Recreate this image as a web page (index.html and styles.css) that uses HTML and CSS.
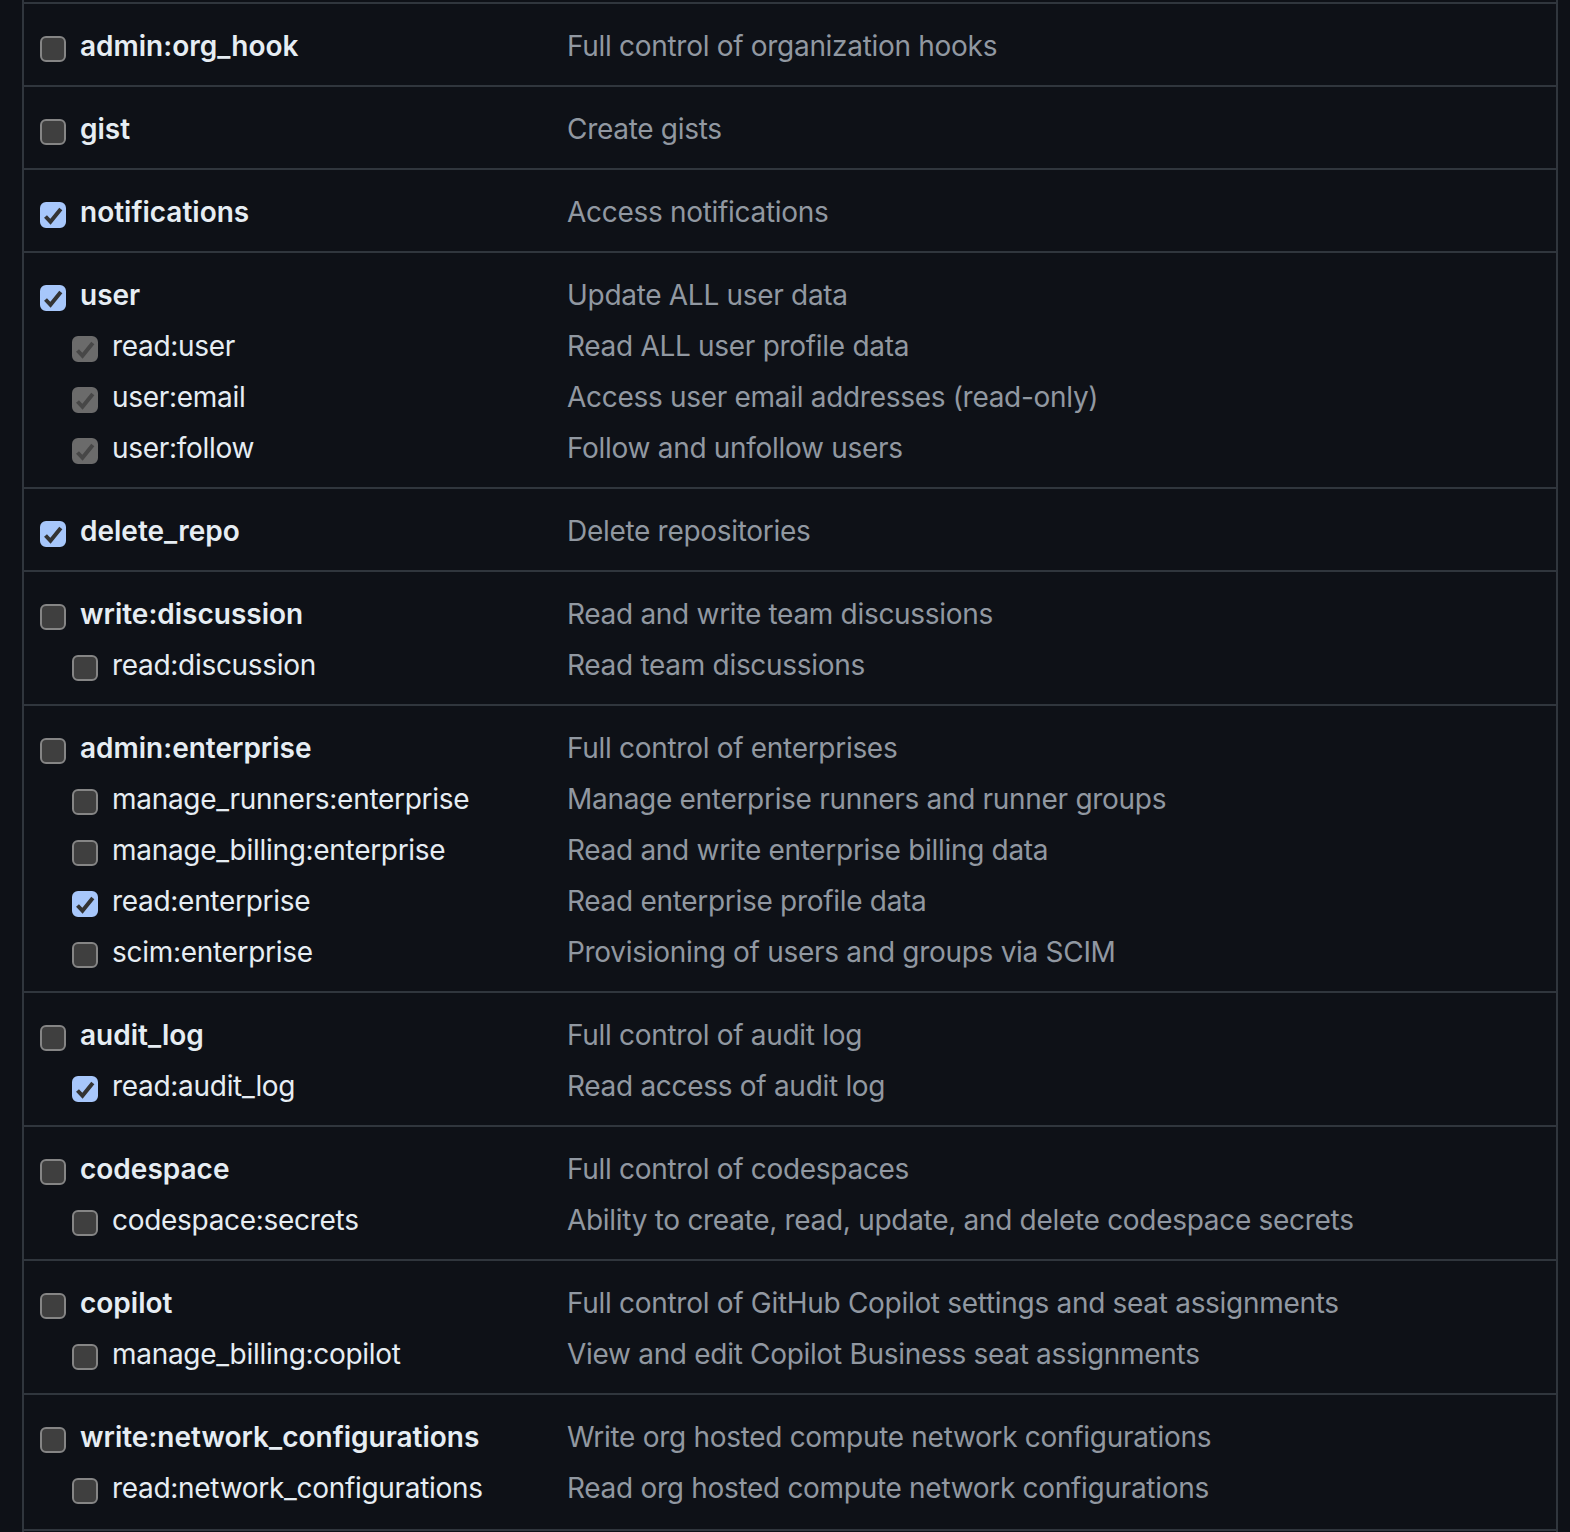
FILE: index.html
```html
<!DOCTYPE html>
<html lang="en">
<head>
<meta charset="utf-8">
<title>Scopes</title>
<link rel="stylesheet" href="styles.css">
</head>
<body>
<div class="scopes">
  <div class="group">
    <div class="line parent"><label class="name"><span class="cb"></span>admin:org_hook</label><span class="desc">Full control of organization hooks</span></div>
  </div>
  <div class="group">
    <div class="line parent"><label class="name"><span class="cb"></span>gist</label><span class="desc">Create gists</span></div>
  </div>
  <div class="group">
    <div class="line parent"><label class="name"><span class="cb checked"><svg viewBox="0 0 26 26"><path d="M5.5 14.5 L10.5 19.8 L20.8 7"/></svg></span>notifications</label><span class="desc">Access notifications</span></div>
  </div>
  <div class="group">
    <div class="line parent"><label class="name"><span class="cb checked"><svg viewBox="0 0 26 26"><path d="M5.5 14.5 L10.5 19.8 L20.8 7"/></svg></span>user</label><span class="desc">Update ALL user data</span></div>
    <div class="line child"><label class="name"><span class="cb disabled"><svg viewBox="0 0 26 26"><path d="M5.5 14.5 L10.5 19.8 L20.8 7"/></svg></span>read:user</label><span class="desc">Read ALL user profile data</span></div>
    <div class="line child"><label class="name"><span class="cb disabled"><svg viewBox="0 0 26 26"><path d="M5.5 14.5 L10.5 19.8 L20.8 7"/></svg></span>user:email</label><span class="desc">Access user email addresses (read-only)</span></div>
    <div class="line child"><label class="name"><span class="cb disabled"><svg viewBox="0 0 26 26"><path d="M5.5 14.5 L10.5 19.8 L20.8 7"/></svg></span>user:follow</label><span class="desc">Follow and unfollow users</span></div>
  </div>
  <div class="group">
    <div class="line parent"><label class="name"><span class="cb checked"><svg viewBox="0 0 26 26"><path d="M5.5 14.5 L10.5 19.8 L20.8 7"/></svg></span>delete_repo</label><span class="desc">Delete repositories</span></div>
  </div>
  <div class="group">
    <div class="line parent"><label class="name"><span class="cb"></span>write:discussion</label><span class="desc">Read and write team discussions</span></div>
    <div class="line child"><label class="name"><span class="cb"></span>read:discussion</label><span class="desc">Read team discussions</span></div>
  </div>
  <div class="group">
    <div class="line parent"><label class="name"><span class="cb"></span>admin:enterprise</label><span class="desc">Full control of enterprises</span></div>
    <div class="line child"><label class="name"><span class="cb"></span>manage_runners:enterprise</label><span class="desc">Manage enterprise runners and runner groups</span></div>
    <div class="line child"><label class="name"><span class="cb"></span>manage_billing:enterprise</label><span class="desc">Read and write enterprise billing data</span></div>
    <div class="line child"><label class="name"><span class="cb checked"><svg viewBox="0 0 26 26"><path d="M5.5 14.5 L10.5 19.8 L20.8 7"/></svg></span>read:enterprise</label><span class="desc">Read enterprise profile data</span></div>
    <div class="line child"><label class="name"><span class="cb"></span>scim:enterprise</label><span class="desc">Provisioning of users and groups via SCIM</span></div>
  </div>
  <div class="group">
    <div class="line parent"><label class="name"><span class="cb"></span>audit_log</label><span class="desc">Full control of audit log</span></div>
    <div class="line child"><label class="name"><span class="cb checked"><svg viewBox="0 0 26 26"><path d="M5.5 14.5 L10.5 19.8 L20.8 7"/></svg></span>read:audit_log</label><span class="desc">Read access of audit log</span></div>
  </div>
  <div class="group">
    <div class="line parent"><label class="name"><span class="cb"></span>codespace</label><span class="desc">Full control of codespaces</span></div>
    <div class="line child"><label class="name"><span class="cb"></span>codespace:secrets</label><span class="desc">Ability to create, read, update, and delete codespace secrets</span></div>
  </div>
  <div class="group">
    <div class="line parent"><label class="name"><span class="cb"></span>copilot</label><span class="desc">Full control of GitHub Copilot settings and seat assignments</span></div>
    <div class="line child"><label class="name"><span class="cb"></span>manage_billing:copilot</label><span class="desc">View and edit Copilot Business seat assignments</span></div>
  </div>
  <div class="group">
    <div class="line parent"><label class="name"><span class="cb"></span>write:network_configurations</label><span class="desc">Write org hosted compute network configurations</span></div>
    <div class="line child"><label class="name"><span class="cb"></span>read:network_configurations</label><span class="desc">Read org hosted compute network configurations</span></div>
  </div>
</div>
</body>
</html>
```
FILE: styles.css
```css
html, body {
  margin: 0;
  padding: 0;
  background: #0e1117;
}
body {
  font-family: Inter, "Noto Sans", "Liberation Sans", sans-serif;
  font-size: 28px;
  color: #e6edf3;
}
.scopes {
  box-sizing: border-box;
  margin-left: 22px;
  width: 1536px;
  min-height: 1532px;
  padding-top: 2px;
  border-left: 2px solid #30363d;
  border-right: 2px solid #30363d;
}
.group {
  border-top: 2px solid #30363d;
  padding: 15px 16px;
}
.group:last-child {
  border-bottom: 2px solid #30363d;
  padding-bottom: 17px;
}
.line {
  box-sizing: border-box;
  display: grid;
  grid-template-columns: 527px 1fr;
  align-items: center;
  height: 51px;
  padding-top: 2px;
  white-space: nowrap;
}
.name {
  display: flex;
  align-items: center;
  gap: 14px;
}
.parent .name {
  font-weight: 600;
}
.child .name {
  padding-left: 32px;
  letter-spacing: -0.3px;
}
.desc {
  color: #9198a1;
  letter-spacing: -0.3px;
}
.cb {
  box-sizing: border-box;
  flex: none;
  width: 26px;
  height: 26px;
  margin-top: 6px;
  border-radius: 6px;
  border: 2px solid #858585;
  background: #3f3f3f;
  display: flex;
}
.cb svg {
  width: 26px;
  height: 26px;
  margin: -2px;
}
.cb path {
  fill: none;
  stroke: #333333;
  stroke-width: 4;
  stroke-linecap: butt;
  stroke-linejoin: miter;
}
.cb.checked {
  background: #a7c7fb;
  border-color: #a7c7fb;
}
.cb.disabled {
  background: #6b6b6b;
  border-color: #6b6b6b;
}
.cb.disabled path {
  stroke: #474747;
}
```
